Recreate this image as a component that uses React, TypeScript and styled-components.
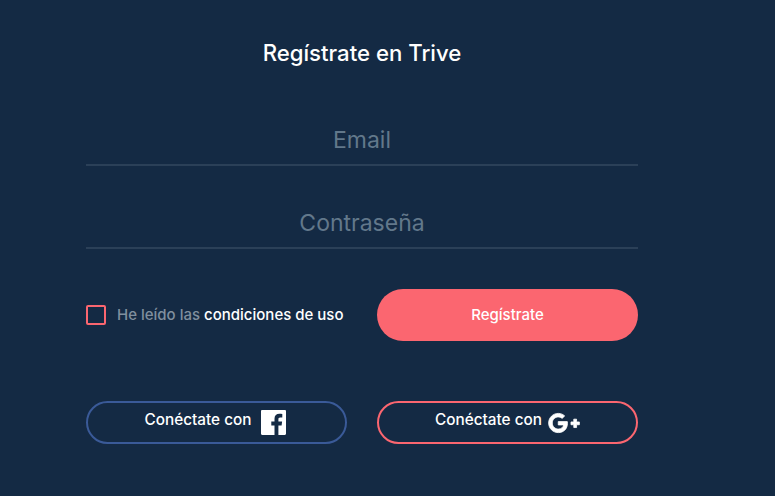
import React from "react";
import styled, { createGlobalStyle } from "styled-components";
import { FaGooglePlusG } from "react-icons/fa";

const Global = createGlobalStyle`
  html, body { margin: 0; padding: 0; background: #142a44; }
  body { font-family: "Inter", "Liberation Sans", sans-serif; }
`;

const Page = styled.div`
  width: 775px;
  height: 496px;
  box-sizing: border-box;
  padding: 40px 137px 0 86px;
  background: #142a44;
  overflow: hidden;
`;

const Title = styled.h1`
  margin: 0;
  height: 26px;
  line-height: 26px;
  font-size: 22.2px;
  font-weight: 500;
  color: #ffffff;
  text-align: center;
`;

const Fields = styled.div`
  display: flex;
  flex-direction: column;
  gap: 35px;
  margin-top: 52px;
`;

const Field = styled.input`
  display: block;
  width: 100%;
  height: 48px;
  box-sizing: border-box;
  padding: 0 0 2px;
  border: 0;
  border-bottom: 2px solid #2b4058;
  background: transparent;
  font-family: inherit;
  font-size: 23px;
  text-align: center;
  color: #ffffff;
  outline: none;
  &::placeholder { color: #62788b; opacity: 1; }
`;

const Row = styled.div`
  display: grid;
  grid-template-columns: 261px 261px;
  column-gap: 30px;
  align-items: center;
`;

const TermsRow = styled(Row)`
  margin-top: 40px;
`;

const SocialRow = styled(Row)`
  margin-top: 60px;
`;

const Terms = styled.label`
  display: flex;
  align-items: center;
  gap: 11px;
  font-size: 15px;
  font-weight: 500;
  white-space: nowrap;
  color: #808f9e;
`;

const Box = styled.span`
  width: 20px;
  height: 20px;
  box-sizing: border-box;
  border: 2px solid #fb6670;
  border-radius: 2px;
  flex: none;
`;

const TermsText = styled.span`
  position: relative;
  top: -1px;
`;

const Strong = styled.span`
  color: #ffffff;
`;

const Submit = styled.button`
  height: 52px;
  padding: 0 0 2px;
  border: 0;
  border-radius: 26px;
  background: #fb6670;
  color: #ffffff;
  font-family: inherit;
  font-size: 15px;
  font-weight: 500;
`;

const Social = styled.button<{ $accent: string; $gap: number; $shift: number }>`
  display: flex;
  align-items: center;
  justify-content: center;
  gap: ${(p) => p.$gap}px;
  height: 43px;
  box-sizing: border-box;
  padding: 0 ${(p) => p.$shift}px 0 0;
  border: 2px solid ${(p) => p.$accent};
  border-radius: 22px;
  background: transparent;
  color: #ffffff;
  font-family: inherit;
  font-size: 15.3px;
  font-weight: 500;
`;

const SocialLabel = styled.span`
  position: relative;
  top: -3px;
`;

const GoogleIcon = styled(FaGooglePlusG)`
  width: 32px;
  height: 32px;
  color: #ffffff;
  stroke: #ffffff;
  stroke-width: 16px;
`;

const FacebookIcon = () => (
  <svg width="25" height="25" viewBox="0 0 25 25" aria-hidden="true">
    <path
      fill="#ffffff"
      fillRule="evenodd"
      d="M1.2 0h22.6C24.5 0 25 .5 25 1.2v22.6c0 .7-.5 1.2-1.2 1.2h-6.4v-9.6h3.2l.5-3.8h-3.7V9.2c0-1.1.3-1.8 1.9-1.8h2V4c-.4 0-1.5-.2-2.9-.2-2.900 0-4.900 1.800-4.900 5v2.800H10.300v3.800h3.200V25H1.200C.5 25 0 24.500 0 23.800V1.200C0 .5.500 0 1.200 0z"
    />
  </svg>
);

export default function App() {
  return (
    <Page>
      <Global />
      <Title>Regístrate en Trive</Title>
      <Fields>
        <Field placeholder="Email" />
        <Field placeholder="Contraseña" type="password" />
      </Fields>
      <TermsRow>
        <Terms>
          <Box />
          <TermsText>
            He leído las <Strong>condiciones de uso</Strong>
          </TermsText>
        </Terms>
        <Submit>Regístrate</Submit>
      </TermsRow>
      <SocialRow>
        <Social $accent="#3a5a98" $gap={10} $shift={2}>
          <SocialLabel>Conéctate con</SocialLabel>
          <FacebookIcon />
        </Social>
        <Social $accent="#fb6670" $gap={6} $shift={0}>
          <SocialLabel>Conéctate con</SocialLabel>
          <GoogleIcon />
        </Social>
      </SocialRow>
    </Page>
  );
}
